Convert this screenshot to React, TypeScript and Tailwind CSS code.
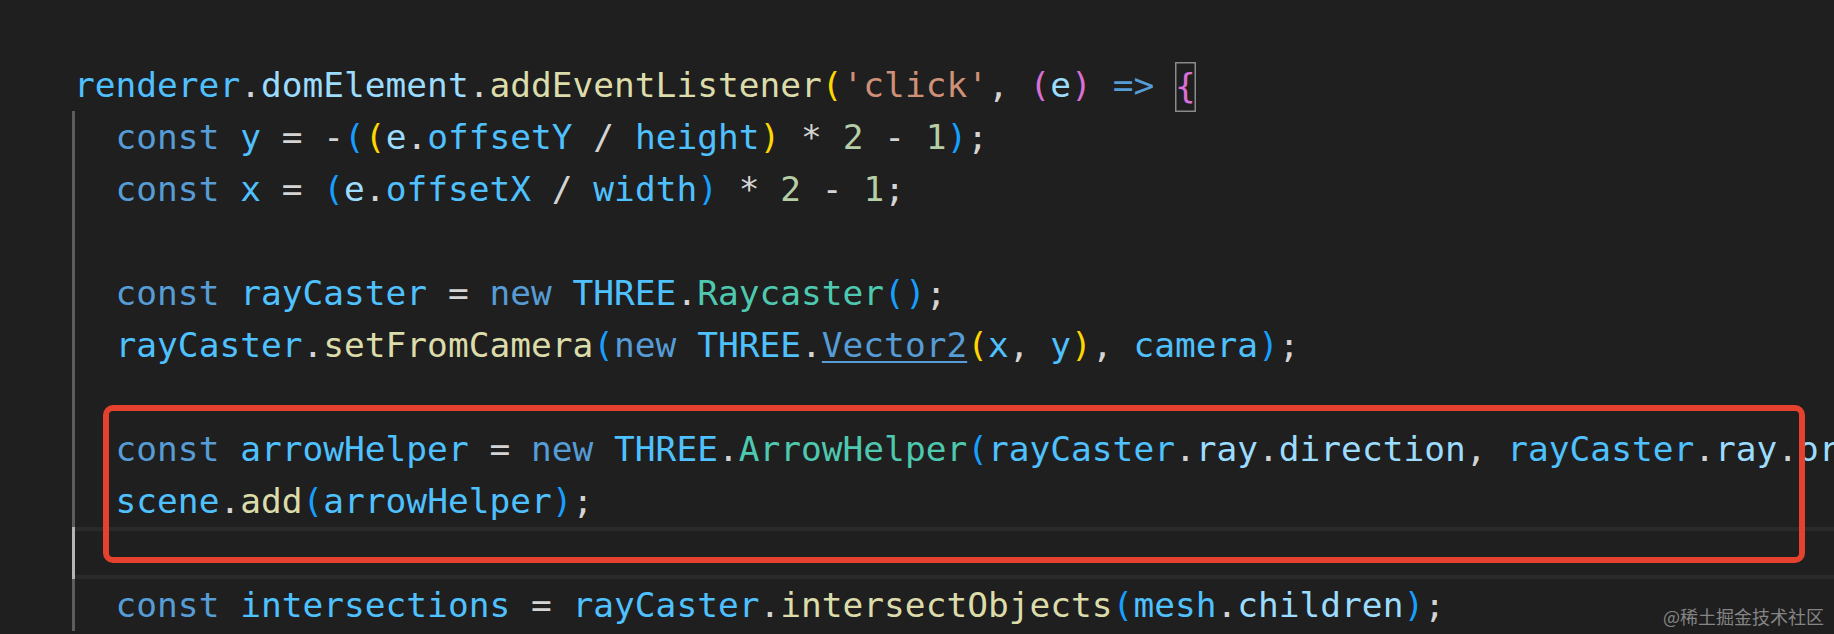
import React from "react";

const kw = "text-[#569cd6]";
const cv = "text-[#4fc1ff]";
const pv = "text-[#9cdcfe]";
const fn = "text-[#dcdcaa]";
const ty = "text-[#4ec9b0]";
const st = "text-[#ce9178]";
const nm = "text-[#b5cea8]";
const pn = "text-[#d4d4d4]";
const b1 = "text-[#ffd700]";
const b2 = "text-[#da70d6]";
const b3 = "text-[#179fff]";

type Tok = [string, string];

function Toks({ toks }: { toks: Tok[] }) {
  return (
    <>
      {toks.map(([c, t], i) => (
        <span key={i} className={c}>
          {t}
        </span>
      ))}
    </>
  );
}

function Plain({ children }: { children?: React.ReactNode }) {
  return <div className="h-[52px] pl-[74px]">{children}</div>;
}

function Indented({ toks, active }: { toks?: Tok[]; active?: boolean }) {
  return (
    <div className="flex h-[52px] pl-[72px]">
      <div className={active ? "w-[3px] shrink-0 bg-[#b4b4b4]" : "w-[3px] shrink-0 bg-[#5c5c5c]"} />
      {active ? (
        <div className="flex-1 border-y-4 border-[#2a2a2a]" />
      ) : (
        <div className="pl-[40.56px]">{toks ? <Toks toks={toks} /> : null}</div>
      )}
    </div>
  );
}

export default function App() {
  return (
    <div className="relative h-[634px] w-[1834px] overflow-hidden whitespace-pre bg-[#1f1f1f] font-['DejaVu_Sans_Mono','Liberation_Mono',monospace] text-[34.5px] leading-[52px]">
      <div className="mt-[59.1px]">
        <Plain>
          <Toks
            toks={[
              [cv, "renderer"],
              [pn, "."],
              [pv, "domElement"],
              [pn, "."],
              [fn, "addEventListener"],
              [b1, "("],
              [st, "'click'"],
              [pn, ", "],
              [b2, "("],
              [pv, "e"],
              [b2, ")"],
              [pn, " "],
              [kw, "=>"],
              [pn, " "],
            ]}
          />
          <span className="mt-[3px] inline-block h-[50px] align-top leading-[48px] text-[#da70d6] shadow-[inset_0_0_0_1.5px_#8a8a8a]">
            {"{"}
          </span>
        </Plain>
        <Indented
          toks={[
            [kw, "const"],
            [pn, " "],
            [cv, "y"],
            [pn, " = -"],
            [b3, "("],
            [b1, "("],
            [pv, "e"],
            [pn, "."],
            [cv, "offsetY"],
            [pn, " / "],
            [cv, "height"],
            [b1, ")"],
            [pn, " * "],
            [nm, "2"],
            [pn, " - "],
            [nm, "1"],
            [b3, ")"],
            [pn, ";"],
          ]}
        />
        <Indented
          toks={[
            [kw, "const"],
            [pn, " "],
            [cv, "x"],
            [pn, " = "],
            [b3, "("],
            [pv, "e"],
            [pn, "."],
            [cv, "offsetX"],
            [pn, " / "],
            [cv, "width"],
            [b3, ")"],
            [pn, " * "],
            [nm, "2"],
            [pn, " - "],
            [nm, "1"],
            [pn, ";"],
          ]}
        />
        <Indented />
        <Indented
          toks={[
            [kw, "const"],
            [pn, " "],
            [cv, "rayCaster"],
            [pn, " = "],
            [kw, "new"],
            [pn, " "],
            [cv, "THREE"],
            [pn, "."],
            [ty, "Raycaster"],
            [b3, "()"],
            [pn, ";"],
          ]}
        />
        <div className="flex h-[52px] pl-[72px]">
          <div className="w-[3px] shrink-0 bg-[#5c5c5c]" />
          <div className="pl-[40.56px]">
            <Toks
              toks={[
                [cv, "rayCaster"],
                [pn, "."],
                [fn, "setFromCamera"],
                [b3, "("],
                [kw, "new"],
                [pn, " "],
                [cv, "THREE"],
                [pn, "."],
              ]}
            />
            <span className="text-[#569cd6] underline decoration-2 underline-offset-[4px]">Vector2</span>
            <Toks
              toks={[
                [b1, "("],
                [cv, "x"],
                [pn, ", "],
                [cv, "y"],
                [b1, ")"],
                [pn, ", "],
                [cv, "camera"],
                [b3, ")"],
                [pn, ";"],
              ]}
            />
          </div>
        </div>
        <Indented />
        <Indented
          toks={[
            [kw, "const"],
            [pn, " "],
            [cv, "arrowHelper"],
            [pn, " = "],
            [kw, "new"],
            [pn, " "],
            [cv, "THREE"],
            [pn, "."],
            [ty, "ArrowHelper"],
            [b3, "("],
            [cv, "rayCaster"],
            [pn, "."],
            [pv, "ray"],
            [pn, "."],
            [pv, "direction"],
            [pn, ", "],
            [cv, "rayCaster"],
            [pn, "."],
            [pv, "ray"],
            [pn, "."],
            [pv, "origin"],
            [b3, ")"],
            [pn, ";"],
          ]}
        />
        <Indented
          toks={[
            [cv, "scene"],
            [pn, "."],
            [fn, "add"],
            [b3, "("],
            [cv, "arrowHelper"],
            [b3, ")"],
            [pn, ";"],
          ]}
        />
        <Indented active />
        <Indented
          toks={[
            [kw, "const"],
            [pn, " "],
            [cv, "intersections"],
            [pn, " = "],
            [cv, "rayCaster"],
            [pn, "."],
            [fn, "intersectObjects"],
            [b3, "("],
            [cv, "mesh"],
            [pn, "."],
            [pv, "children"],
            [b3, ")"],
            [pn, ";"],
          ]}
        />
      </div>

      <div className="absolute left-[103px] top-[405px] h-[158px] w-[1702px] rounded-[10px] border-[6px] border-[#e4412e]" />

      <div className="absolute bottom-[9px] right-[10px] font-['Noto_Sans_CJK_SC',sans-serif] text-[18px] leading-[18px] text-[#858585]">
        @稀土掘金技术社区
      </div>
    </div>
  );
}
